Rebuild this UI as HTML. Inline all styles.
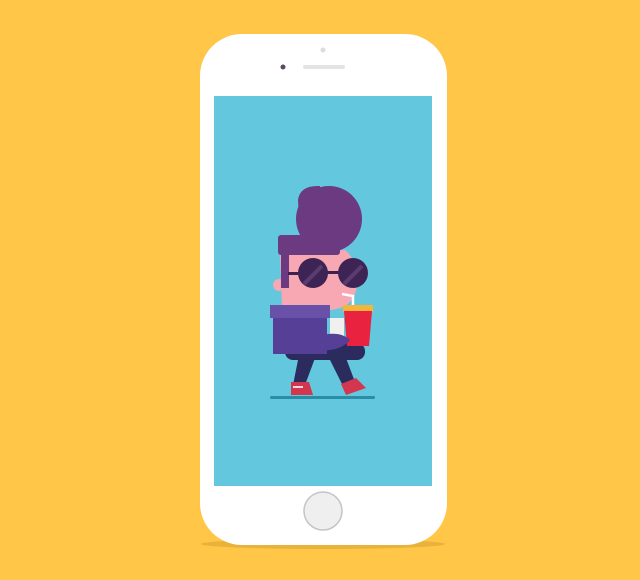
<!DOCTYPE html>
<html><head><style>
html,body{margin:0;padding:0;width:640px;height:580px;overflow:hidden;background:#FFC647;}
</style></head><body>
<svg width="640" height="580" viewBox="0 0 640 580" xmlns="http://www.w3.org/2000/svg">
<rect width="640" height="580" fill="#FFC647"/>
<ellipse cx="323" cy="544" rx="122" ry="5" fill="#E0A935" opacity="0.7"/>
<rect x="200" y="34" width="247" height="511" rx="42" fill="#FFFFFF"/>
<rect x="214" y="96" width="218" height="390" fill="#63C7DE"/>
<circle cx="323" cy="50" r="2.5" fill="#ddd"/>
<circle cx="283" cy="67" r="2.5" fill="#5a4a66"/>
<rect x="303" y="65" width="42" height="4" rx="2" fill="#e4e4e4"/>
<circle cx="323" cy="511" r="19" fill="#EFEFF0" stroke="#C4C4CA" stroke-width="1.5"/>
<!-- ground -->
<rect x="270" y="396" width="105" height="3" rx="1.5" fill="#2A8DA6"/>
<!-- legs -->
<path d="M300 350 L318 350 L305 385 L293 385 Z" fill="#2B2B5E"/>
<path d="M325 350 L343 350 L355 382 L343 386 Z" fill="#2B2B5E"/>
<!-- shoes -->
<path d="M291 382 L309 382 L313 395 L291 395 Z" fill="#D2374F"/>
<rect x="293" y="386" width="10" height="2" fill="#fff" opacity="0.8"/>
<path d="M341 384 L356 378 L366 388 L346 395 Z" fill="#D2374F"/>
<!-- pants top -->
<rect x="285" y="343" width="80" height="17" rx="8" fill="#2B2B5E"/>
<!-- hair swoosh -->
<ellipse cx="329" cy="219" rx="33" ry="33" fill="#6B3A80"/>
<path d="M298 200 Q300 185 320 186 L320 235 L300 235 Z" fill="#6B3A80"/>
<!-- face -->
<path d="M280 255 L345 250 Q358 260 357 285 Q355 308 330 310 L282 308 Z" fill="#F7A8B2"/>
<circle cx="279" cy="285" r="6" fill="#F7A8B2"/>
<!-- hair block -->
<rect x="278" y="235" width="62" height="20" rx="3" fill="#6B3A80"/>
<rect x="281" y="250" width="8" height="38" fill="#6B3A80"/>
<!-- glasses -->
<rect x="325" y="271" width="16" height="3" fill="#3A2150"/>
<rect x="288" y="272" width="12" height="3" fill="#3A2150"/>
<circle cx="313" cy="273" r="15" fill="#3E2455"/>
<circle cx="353" cy="273" r="15" fill="#3E2455"/>
<path d="M304 284 L322 266" stroke="#5a3c70" stroke-width="4"/>
<path d="M344 284 L362 266" stroke="#5a3c70" stroke-width="4"/>
<!-- straw & cup -->
<path d="M353 310 L353 296 L342 294" stroke="#fff" stroke-width="2.5" fill="none"/>
<rect x="330" y="318" width="14" height="22" fill="#F0F0F0"/>
<rect x="343" y="305" width="30" height="7" fill="#F5B53A"/>
<path d="M344 311 L372 311 L369 346 L347 346 Z" fill="#E8223F"/>
<!-- box -->
<rect x="273" y="317" width="54" height="37" fill="#563F97"/>
<rect x="270" y="305" width="60" height="13" fill="#6950A9"/>
<path d="M318 336 Q340 330 350 340 Q340 352 318 350 Z" fill="#563F97"/>
</svg>
</body></html>
